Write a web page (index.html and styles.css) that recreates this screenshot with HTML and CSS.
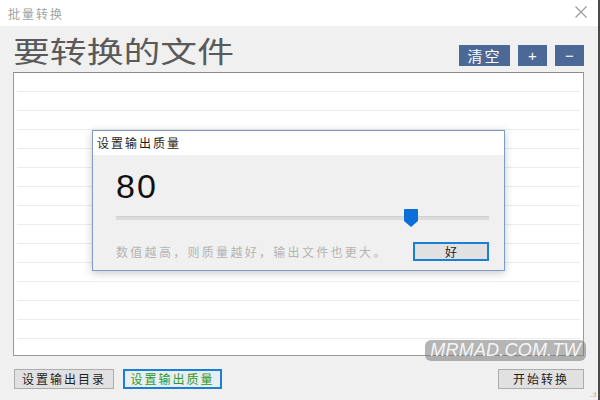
FILE: index.html
```html
<!DOCTYPE html>
<html lang="zh">
<head>
<meta charset="utf-8">
<title>批量转换</title>
<link rel="stylesheet" href="styles.css">
</head>
<body>
<div class="window">
  <div class="titlebar">
    <span class="title">批量转换</span>
    <svg class="close" width="12" height="12" viewBox="0 0 12 12"><path d="M0.5 0.5 L11.5 11.5 M11.5 0.5 L0.5 11.5" stroke="#9a9a9a" stroke-width="1.2" fill="none"/></svg>
  </div>
  <div class="body">
    <div class="header">
      <h1 class="heading"><span class="stretch">要转换的文件</span></h1>
      <div class="tools">
        <button class="tool tool-wide">清空</button>
        <button class="tool">+</button>
        <button class="tool">−</button>
      </div>
    </div>
    <div class="list">
      <div class="row"></div><div class="row"></div><div class="row"></div><div class="row"></div>
      <div class="row"></div><div class="row"></div><div class="row"></div><div class="row"></div>
      <div class="row"></div><div class="row"></div><div class="row"></div><div class="row"></div>
      <div class="row"></div><div class="row"></div><div class="row"></div>
    </div>
    <div class="footer">
      <button class="btn">设置输出目录</button>
      <button class="btn btn-focus">设置输出质量</button>
      <span class="spacer"></span>
      <button class="btn btn-start">开始转换</button>
    </div>
  </div>
  <div class="watermark">MRMAD.COM.TW</div>
  <div class="grip">.:l</div>
  <div class="dialog">
    <div class="dlg-title">设置输出质量</div>
    <div class="dlg-body">
      <div class="value">80</div>
      <div class="slider">
        <div class="track"></div>
        <svg class="thumb" width="14" height="18" viewBox="0 0 14 18"><path d="M1 0 H13 Q14 0 14 1 V12 L7 18 L0 12 V1 Q0 0 1 0 Z" fill="#0a6fd6"/></svg>
      </div>
      <div class="dlg-foot">
        <span class="hint">数值越高，则质量越好，输出文件也更大。</span>
        <button class="ok">好</button>
      </div>
    </div>
  </div>
</div>
</body>
</html>
```
FILE: styles.css
```css
html, body {
  margin: 0;
  padding: 0;
}
body {
  width: 600px;
  height: 400px;
  overflow: hidden;
  font-family: "Noto Sans CJK SC", "Liberation Sans", sans-serif;
}
.window {
  position: relative;
  width: 598px;
  height: 400px;
  border-right: 2px solid #4a4a4a;
  background: #f0f0f0;
  display: flex;
  flex-direction: column;
}
.titlebar {
  height: 26px;
  background: #ffffff;
  display: flex;
  align-items: center;
  justify-content: space-between;
  padding: 0 11px 0 8px;
}
.title {
  font-size: 12px;
  letter-spacing: 2px;
  color: #a3a3a3;
}
.close {
  display: block;
  margin-top: -2px;
}
.body {
  flex: 1;
  display: flex;
  flex-direction: column;
  padding: 0 14px 0 13px;
}
.header {
  height: 46px;
  display: flex;
  align-items: flex-end;
  justify-content: space-between;
}
.heading {
  margin: 0 0 4px 0;
  font-weight: normal;
  font-size: 29px;
  line-height: 36px;
  color: #5a5a5a;
}
.stretch {
  display: inline-block;
  transform: scaleX(1.27);
  transform-origin: left center;
}
.tools {
  display: flex;
  gap: 8px;
  margin-bottom: 6px;
}
.tool {
  width: 29px;
  height: 21px;
  border: none;
  padding: 0;
  background: #4b6896;
  color: #ffffff;
  font-family: "Liberation Sans", sans-serif;
  font-size: 15px;
  line-height: 21px;
}
.tool-wide {
  width: 51px;
  font-family: "Noto Sans CJK SC", sans-serif;
  font-size: 15px;
  letter-spacing: 2px;
}
.list {
  height: 284px;
  box-sizing: border-box;
  border: 1px solid #9a9a9a;
  border-top-color: #8a8a8a;
  background: #ffffff;
  padding: 0 3px;
  overflow: hidden;
}
.row {
  height: 19px;
  box-sizing: border-box;
  border-bottom: 1px solid #ececec;
}
.footer {
  display: flex;
  align-items: center;
  margin-top: 13px;
}
.btn {
  height: 20px;
  box-sizing: border-box;
  padding: 0;
  width: 100px;
  margin-left: 1px;
  border: 1px solid #adadad;
  background: #e1e1e1;
  font-family: "Noto Sans CJK SC", sans-serif;
  font-size: 12px;
  letter-spacing: 2px;
  line-height: 18px;
  color: #1e1e1e;
}
.btn-focus {
  width: 99px;
  margin-left: 9px;
  border: 2px solid #1a7fd6;
  background: #e9eef3;
  color: #2d9a2d;
  line-height: 16px;
}
.spacer {
  flex: 1;
}
.btn-start {
  width: 86px;
  margin-left: 0;
}
.watermark {
  position: absolute;
  left: 425px;
  top: 340px;
  width: 161px;
  height: 21px;
  border-radius: 6px;
  background: rgba(120, 120, 120, 0.55);
  color: rgba(255, 255, 255, 0.9);
  font-family: "Liberation Sans", sans-serif;
  font-style: italic;
  font-size: 18px;
  line-height: 21px;
  text-align: center;
  letter-spacing: 0.2px;
}
.grip {
  position: absolute;
  right: 2px;
  bottom: 1px;
  font-size: 8px;
  color: #9a9a9a;
  font-family: "Liberation Sans", sans-serif;
}
.dialog {
  position: absolute;
  left: 92px;
  top: 130px;
  width: 413px;
  height: 141px;
  box-sizing: border-box;
  border: 1px solid #7d9dc6;
  background: #f0f0f0;
  box-shadow: 0 2px 8px rgba(0, 0, 0, 0.22);
  display: flex;
  flex-direction: column;
}
.dlg-title {
  height: 24px;
  background: #ffffff;
  font-size: 12px;
  letter-spacing: 2px;
  line-height: 24px;
  padding-left: 4px;
  color: #1e1e1e;
}
.dlg-body {
  padding: 0 15px 0 23px;
  display: flex;
  flex-direction: column;
}
.value {
  margin-top: 13px;
  font-family: "Liberation Sans", sans-serif;
  font-size: 34px;
  line-height: 36px;
  color: #111111;
  letter-spacing: 2px;
}
.slider {
  position: relative;
  height: 18px;
  margin-top: 5px;
}
.track {
  position: absolute;
  left: 0;
  right: 0;
  top: 7px;
  height: 3px;
  background: #dcdcdc;
  border-top: 1px solid #d0d0d0;
}
.thumb {
  position: absolute;
  left: 288px;
  top: 0;
  display: block;
}
.dlg-foot {
  display: flex;
  align-items: center;
  justify-content: space-between;
  margin-top: 15px;
}
.hint {
  font-size: 12px;
  letter-spacing: 2.3px;
  color: #b4b4b4;
}
.ok {
  width: 76px;
  height: 19px;
  box-sizing: border-box;
  padding: 0;
  border: 2px solid #1a7fd6;
  background: #e1e1e1;
  font-family: "Noto Sans CJK SC", sans-serif;
  font-size: 12px;
  line-height: 15px;
  color: #1e1e1e;
}
```
